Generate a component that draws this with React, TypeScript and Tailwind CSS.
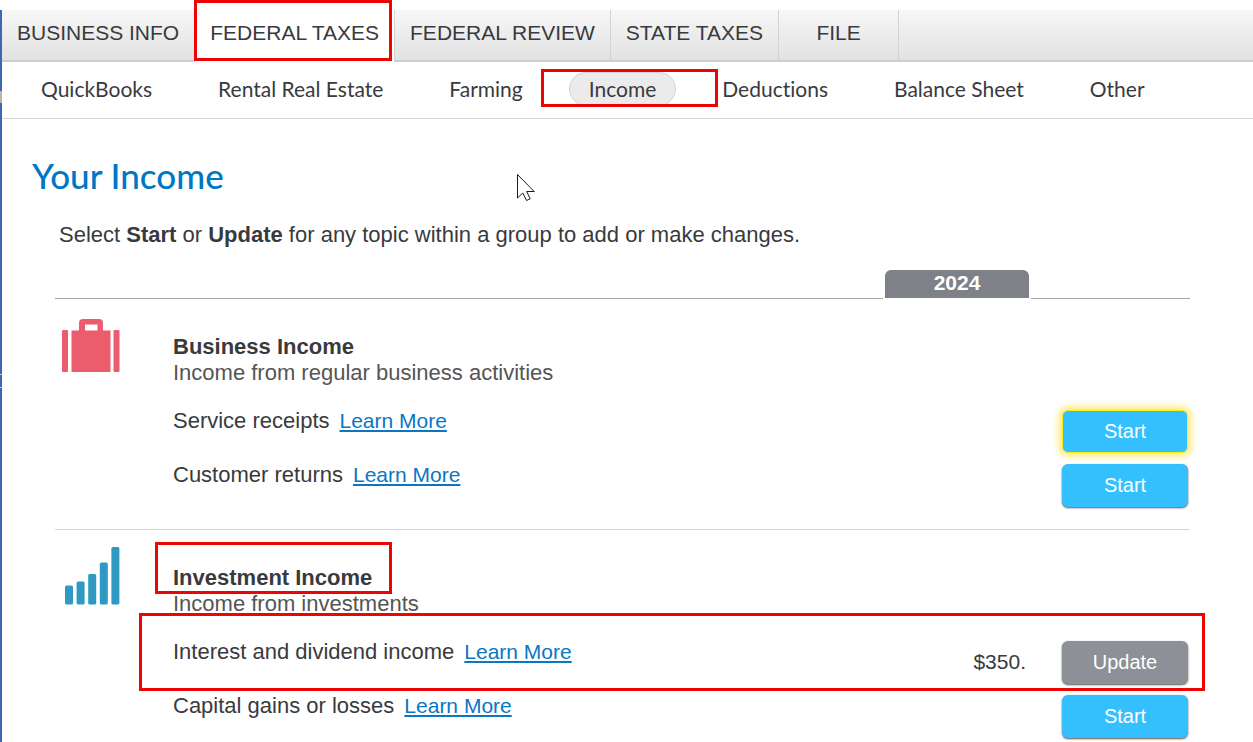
import React from 'react';
import { clsx } from 'clsx';

const tabs = ['BUSINESS INFO', 'FEDERAL TAXES', 'FEDERAL REVIEW', 'STATE TAXES', 'FILE'];

const topics = [
  'QuickBooks',
  'Rental Real Estate',
  'Farming',
  'Income',
  'Deductions',
  'Balance Sheet',
  'Other',
];

interface Topic {
  label: string;
  amount?: string;
  focused?: boolean;
  marked?: boolean;
}

interface Group {
  title: string;
  description: string;
  icon: React.ReactNode;
  marked?: boolean;
  rows: Topic[];
}

function Suitcase() {
  return (
    <svg width="58" height="54" viewBox="0 0 58 54" fill="#eb5d6d" aria-hidden="true">
      <rect x="0" y="11" width="6" height="42" rx="1" />
      <rect x="51.500" y="11" width="6" height="42" rx="1" />
      <path
        fillRule="evenodd"
        d="M9.500 11.500H17V4a4 4 0 0 1 4-4h16a4 4 0 0 1 4 4v7.500h7.500V53h-39zM23 5.500v6h12.500v-6z"
      />
    </svg>
  );
}

function Bars() {
  return (
    <svg width="58" height="58" viewBox="0 0 58 58" fill="#2e9ac4" aria-hidden="true">
      <rect x="3" y="38.500" width="8" height="19" rx="1.500" />
      <rect x="14.600" y="34.500" width="8" height="23" rx="1.500" />
      <rect x="26.200" y="27" width="8" height="30.500" rx="1.500" />
      <rect x="37.800" y="15.500" width="8" height="42" rx="1.500" />
      <rect x="49.400" y="0" width="8" height="57.500" rx="1.500" />
    </svg>
  );
}

const groups: Group[] = [
  {
    title: 'Business Income',
    description: 'Income from regular business activities',
    icon: <Suitcase />,
    rows: [{ label: 'Service receipts', focused: true }, { label: 'Customer returns' }],
  },
  {
    title: 'Investment Income',
    description: 'Income from investments',
    icon: <Bars />,
    marked: true,
    rows: [
      { label: 'Interest and dividend income', amount: '$350.', marked: true },
      { label: 'Capital gains or losses' },
    ],
  },
];

// Red call-out frame drawn over the element it belongs to
function Frame({ className }: { className: string }) {
  return (
    <span
      className={clsx('absolute z-10 border-3 border-[#eb0505] pointer-events-none', className)}
    />
  );
}

function TopicRow({ label, amount, focused, marked }: Topic) {
  return (
    <li className="relative flex items-start h-[54px] pr-0.5">
      {marked && <Frame className="-left-[34px] -right-[15px] -top-[27px] h-[78px]" />}
      <p className="flex-1 flex items-baseline gap-2.5 text-[22px] leading-6">
        {label}
        <a href="#" className="text-[21px] text-[#0a76c4] underline underline-offset-2">
          Learn More
        </a>
      </p>
      {amount && <span className="mr-9 text-[21px] leading-[43px]">{amount}</span>}
      <button
        type="button"
        className={clsx(
          'mt-px w-[126px] h-[43px] pb-0.5 rounded-md text-[20px] text-white',
          amount ? 'bg-[#8d9096]' : 'bg-[#34bfff]',
          focused
            ? 'border border-[#f8ec1c] shadow-[0_0_8px_2px_#ffe24d]'
            : 'shadow-[0_1px_2px_#555]'
        )}
      >
        {amount ? 'Update' : 'Start'}
      </button>
    </li>
  );
}

function GroupSection({ title, description, icon, marked, rows }: Group) {
  return (
    <section className="flex border-b border-[#d5d5d5] pb-3">
      <div className="w-[118px] shrink-0 pl-[7px] pt-[17px]">
        <div className={marked ? '' : 'mt-[3px]'}>{icon}</div>
      </div>
      <div className="flex-1 pt-[35px]">
        <div className="relative w-fit">
          {marked && <Frame className="-left-[18px] -right-5 -top-[23px] h-[52px]" />}
          <h2 className="text-[22px] leading-[26px] font-bold">{title}</h2>
        </div>
        <p className="text-[22px] leading-[26px] text-[#555]">{description}</p>
        <ul className="mt-[23px]">
          {rows.map((row) => (
            <TopicRow key={row.label} {...row} />
          ))}
        </ul>
      </div>
    </section>
  );
}

function Cursor() {
  return (
    <svg
      className="absolute left-[515px] top-[55px]"
      width="19"
      height="28"
      viewBox="0 0 19 28"
      fill="#fff"
      stroke="#1a1a24"
      strokeWidth="1"
      aria-hidden="true"
    >
      <path d="M.5.500v23.500l5.300-5 3.700 7.500 3.700-1.700-3.500-7.300h7.500z" />
    </svg>
  );
}

export default function App() {
  return (
    <div className="h-screen overflow-hidden bg-white pt-2.5 font-['Liberation_Sans',Arial,sans-serif] text-[#393a3d]">
      <div className="relative min-h-full border-l-2 border-[#3f66b8]">
        <span className="absolute -left-0.5 top-[81px] w-0.5 h-3 bg-[#b9b4a8]" />
        <span className="absolute -left-0.5 top-[364px] w-0.5 h-[14px] border-y border-[#c9c5b4]" />

        {/* Main tabs */}
        <nav className="flex h-[52px] border-b-2 border-[#cfcfcf] bg-linear-to-b from-[#f7f7f7] via-[#ececec] to-[#e2e2e2]">
          {tabs.map((tab) => (
            <a
              key={tab}
              href="#"
              className={clsx(
                'relative flex justify-center min-w-[120px] px-[15px] border-r border-[#d3d3d3] text-[21px] leading-[46px] whitespace-nowrap',
                tab === 'FEDERAL TAXES' && 'bg-white -mb-0.5'
              )}
            >
              {tab === 'FEDERAL TAXES' && <Frame className="-left-px right-[2px] -top-2.5 h-[61px]" />}
              {tab}
            </a>
          ))}
        </nav>

        {/* Topics of the selected tab */}
        <nav className="flex items-start gap-[26px] h-[57px] pt-2.5 pl-[19px] border-b border-[#d5d5d5] font-[Lato,sans-serif] [font-variant-ligatures:none]">
          {topics.map((topic) => (
            <a
              key={topic}
              href="#"
              className={clsx(
                'relative px-[19px] border rounded-full text-[21px] leading-8 whitespace-nowrap',
                topic === 'Income' ? 'bg-[#ebebeb] border-[#d3d3d3]' : 'border-transparent'
              )}
            >
              {topic === 'Income' && <Frame className="-left-[29px] -right-[43px] -top-1 h-[38px]" />}
              {topic}
            </a>
          ))}
        </nav>

        <main className="relative pt-9 pr-[63px] pl-[53px]">
          <Cursor />
          <h1 className="-ml-[23px] font-[Lato,sans-serif] font-medium text-[35px] leading-10 text-[#0077c5]">
            Your Income
          </h1>
          <p className="mt-[25px] ml-1 text-[22px] leading-[30px]">
            Select <b>Start</b> or <b>Update</b> for any topic within a group to add or make changes.
          </p>

          <div className="mt-5 flex items-end gap-0.5">
            <div className="flex-1 border-b border-[#a5a5a5]" />
            <div className="w-[144px] h-7 mb-px rounded-t-md bg-[#7f8188] text-center text-[21px] leading-[26px] font-bold text-white">
              2024
            </div>
            <div className="w-[159px] border-b border-[#a5a5a5]" />
          </div>

          {groups.map((group) => (
            <GroupSection key={group.title} {...group} />
          ))}
        </main>
      </div>
    </div>
  );
}
